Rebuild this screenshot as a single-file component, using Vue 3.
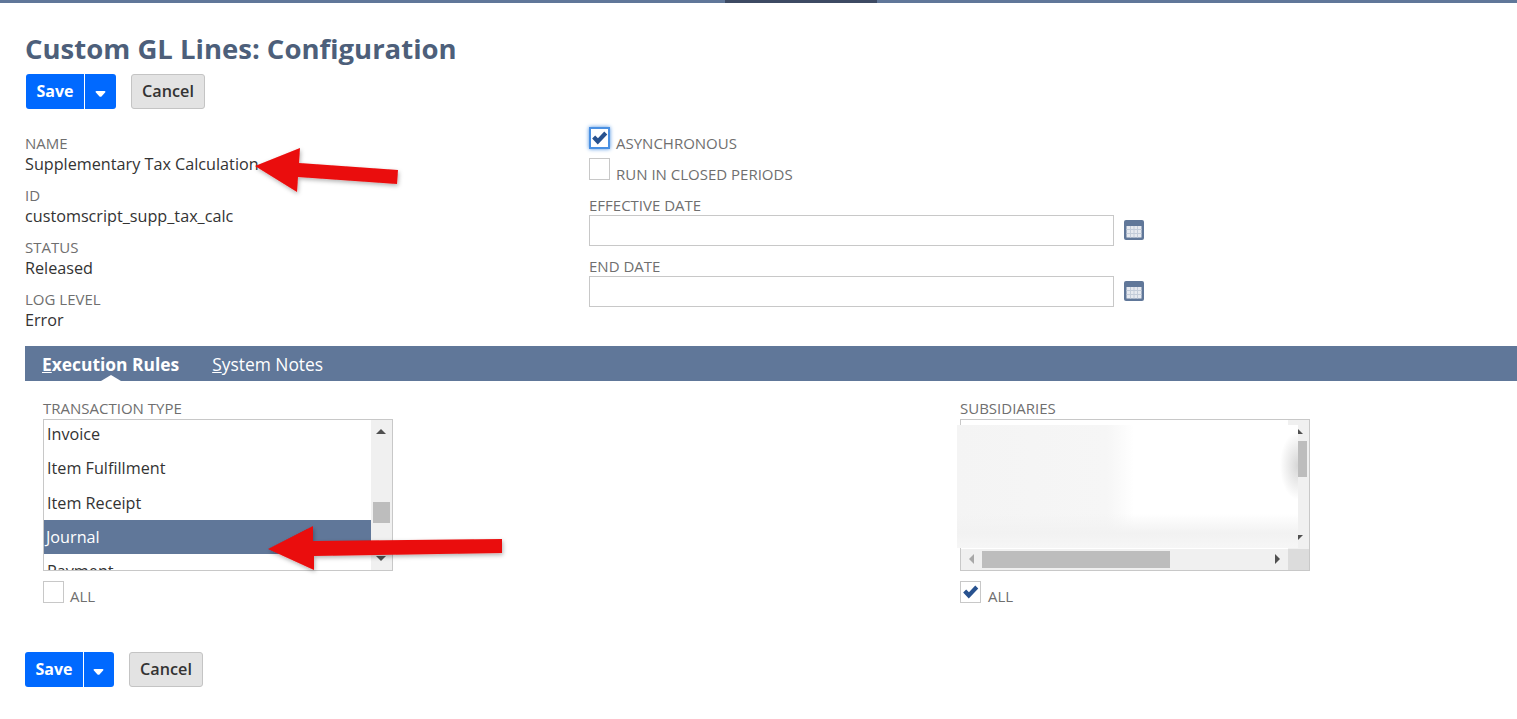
<script setup>
const fields = [
  { label: 'Name', value: 'Supplementary Tax Calculation' },
  { label: 'ID', value: 'customscript_supp_tax_calc' },
  { label: 'Status', value: 'Released' },
  { label: 'Log Level', value: 'Error' },
]
const rows = ['Invoice', 'Item Fulfillment', 'Item Receipt', 'Journal', 'Payment']
</script>

<template>
  <div class="page">
    <div class="topbar"><i class="seg a"></i><i class="seg b"></i><i class="seg c"></i></div>
    <h1 class="title">Custom GL Lines: Configuration</h1>
    <div class="actions first">
      <div class="save"><span class="save-text">Save</span><span class="save-drop"><svg class="caret" viewBox="0 0 10 6"><path d="M1 0h8c1 0 1.200 .8 .6 1.400L6 5.400c-.6 .6-1.400 .6-2 0L.4 1.400C-.2 .8 0 0 1 0z" /></svg></span></div>
      <button class="cancel">Cancel</button>
    </div>

    <div class="form">
      <div class="col-left">
        <div v-for="f in fields" :key="f.label" class="field">
          <div class="label">{{ f.label }}</div>
          <div class="value">{{ f.value }}</div>
        </div>
      </div>
      <div class="col-right">
        <div class="check-row focus-row">
          <span class="box focus">
            <svg viewBox="0 0 22 22" class="tick"><path d="M2.500 11.500L6 8l3.200 3.200L16.500 3.500 20 7 9 18.500z" /></svg>
          </span>
          <span class="label">Asynchronous</span>
        </div>
        <div class="check-row second-row">
          <span class="box"></span>
          <span class="label">Run in closed periods</span>
        </div>
        <div class="date-field">
          <div class="label">Effective Date</div>
          <div class="date-row">
            <div class="input"></div>
            <svg class="cal" viewBox="0 0 20 20">
              <rect x="0" y="0" width="20" height="20" rx="2" fill="#607799" />
              <rect x="2.500" y="6" width="15" height="11.500" fill="#e6e9ef" />
              <path d="M2.500 9.500h15M2.500 13.500h15M6.500 6v11.500M10 6v11.500M13.500 6v11.500" stroke="#c3ccd9" stroke-width="1" fill="none" />
            </svg>
          </div>
        </div>
        <div class="date-field">
          <div class="label">End Date</div>
          <div class="date-row">
            <div class="input"></div>
            <svg class="cal" viewBox="0 0 20 20">
              <rect x="0" y="0" width="20" height="20" rx="2" fill="#607799" />
              <rect x="2.500" y="6" width="15" height="11.500" fill="#e6e9ef" />
              <path d="M2.500 9.500h15M2.500 13.500h15M6.500 6v11.500M10 6v11.500M13.500 6v11.500" stroke="#c3ccd9" stroke-width="1" fill="none" />
            </svg>
          </div>
        </div>
      </div>
    </div>

    <div class="tabs">
      <span class="tab active"><u>E</u>xecution Rules<i class="notch"></i></span>
      <span class="tab"><u>S</u>ystem Notes</span>
    </div>

    <div class="lists">
      <div class="list-col">
        <div class="label list-label">Transaction Type</div>
        <div class="listbox">
          <div class="rows">
            <div v-for="r in rows" :key="r" class="row" :class="{ selected: r === 'Journal' }">{{ r }}</div>
          </div>
          <div class="vscroll">
            <i class="arrow up dark"></i>
            <i class="vthumb small"></i>
            <i class="arrow down dark"></i>
          </div>
        </div>
        <div class="check-row all">
          <span class="box"></span>
          <span class="label">All</span>
        </div>
      </div>

      <div class="list-col sub">
        <div class="label list-label">Subsidiaries</div>
        <div class="listbox multi">
          <div class="multi-main">
            <div class="rows"></div>
            <div class="vscroll short">
              <i class="arrow up dark"></i>
              <i class="vthumb big"></i>
              <i class="arrow down dark"></i>
            </div>
          </div>
          <div class="hscroll">
            <i class="arrow left"></i>
            <i class="hthumb"></i>
            <i class="arrow right"></i>
            <i class="corner"></i>
          </div>
        </div>
        <div class="blur"></div>
        <div class="check-row all">
          <span class="box">
            <svg viewBox="0 0 22 22" class="tick"><path d="M2.500 11.500L6 8l3.200 3.200L16.500 3.500 20 7 9 18.500z" /></svg>
          </span>
          <span class="label">All</span>
        </div>
      </div>
    </div>

    <div class="actions last">
      <div class="save"><span class="save-text">Save</span><span class="save-drop"><svg class="caret" viewBox="0 0 10 6"><path d="M1 0h8c1 0 1.200 .8 .6 1.400L6 5.400c-.6 .6-1.400 .6-2 0L.4 1.400C-.2 .8 0 0 1 0z" /></svg></span></div>
      <button class="cancel">Cancel</button>
    </div>

    <svg class="arrows" width="1517" height="719" viewBox="0 0 1517 719">
      <defs>
        <filter id="sh" x="-10%" y="-20%" width="120%" height="150%">
          <feDropShadow dx="1" dy="2" stdDeviation="2" flood-color="#000" flood-opacity="0.3" />
        </filter>
      </defs>
      <path filter="url(#sh)" fill="#ea0a0a" d="M255 166L300 148L299 163L398 170L397 184L298 177L297 192Z" />
      <path filter="url(#sh)" fill="#ea0a0a" d="M268 549L313 526L313 541L502 539L502 553L314 556L314 570Z" />
    </svg>
  </div>
</template>

<style>
html, body { margin: 0; background: #fff; }
</style>

<style scoped>
.page {
  position: relative;
  width: 1517px;
  height: 719px;
  overflow: hidden;
  font-family: "Open Sans", "Noto Sans", sans-serif;
  color: #333;
  background: #fff;
}
.topbar { display: flex; height: 3px; }
.seg { display: block; background: #607799; }
.seg.a { width: 725px; }
.seg.b { width: 152px; background: #3d4a63; }
.seg.c { flex: 1; }
.title {
  margin: 28px 0 0 25px;
  font-size: 27.500px;
  line-height: 36px;
  font-weight: 700;
  color: #4d5f7a;
}
.actions { display: flex; align-items: stretch; height: 35px; }
.actions.first { margin: 7px 0 0 26px; }
.actions.last { margin: 28px 0 0 25px; }
.save {
  display: flex;
  width: 90px;
  height: 35px;
  box-sizing: border-box;
  background: #0069ff;
  border-radius: 3px;
  color: #fff;
  font-size: 16px;
  font-weight: 700;
  line-height: 34px;
}
.actions.last .save { width: 89px; }
.save-text { width: 58px; text-align: center; border-right: 1px solid #fff; }
.save-drop { flex: 1; display: flex; align-items: center; justify-content: center; padding-right: 1px; }
.actions.last .save-drop { padding-right: 2px; }
.caret { display: block; width: 11px; height: 6px; margin-top: 4px; fill: #fff; }
.cancel {
  width: 74px;
  height: 35px;
  margin-left: 15px;
  padding: 0 0 2px;
  background: #e3e3e3;
  border: 1px solid #c4c4c4;
  border-radius: 3px;
  font-family: inherit;
  font-size: 16.200px;
  font-weight: 600;
  color: #333;
}
.form { display: flex; margin: 15px 0 0 25px; height: 222px; }
.col-left { width: 564px; padding-top: 9px; }
.field { height: 52px; }
.label {
  font-size: 15px;
  line-height: 20px;
  color: #6f6f6f;
  text-transform: uppercase;
  white-space: nowrap;
}
.value { font-size: 16.200px; line-height: 21px; color: #333; margin-top: 1px; }
.col-right { width: 560px; padding-top: 3px; }
.check-row { display: flex; align-items: flex-start; }
.box {
  display: block;
  box-sizing: border-box;
  width: 21px;
  height: 22px;
  border: 1px solid #c8c8c8;
  background: #fff;
  flex: none;
}
.box.focus {
  border: 2px solid #4a90e2;
  box-shadow: 0 0 4px #4a90e2;
}
.box.focus .tick { margin: -1px 0 0 -1px; }
.tick { display: block; width: 19px; height: 20px; }
.tick path { fill: #28528f; }
.check-row .label { margin: 6px 0 0 6px; }
.second-row { margin-top: 9px; }
.focus-row { height: 22px; }
.date-field { margin-top: 11px; }
.date-row { display: flex; align-items: center; gap: 10px; }
.input {
  box-sizing: border-box;
  width: 525px;
  height: 31px;
  border: 1px solid #c8c8c8;
  background: #fff;
}
.date-field + .date-field { margin-top: 10px; }
.cal { width: 20px; height: 20px; display: block; margin-top: -1px; }
.tabs {
  display: flex;
  height: 35px;
  margin: 0 0 0 25px;
  padding-left: 17px;
  gap: 33px;
  background: #607799;
  color: #fff;
  font-size: 17.400px;
  line-height: 36px;
}
.tab { position: relative; white-space: nowrap; }
.tab.active { font-weight: 700; }
.notch {
  position: absolute;
  left: 59px;
  bottom: 0;
  width: 0;
  height: 0;
  border-left: 10px solid transparent;
  border-right: 10px solid transparent;
  border-bottom: 6px solid #fff;
}
.lists { display: flex; margin: 18px 0 0 43px; height: 225px; }
.list-col { width: 917px; position: relative; }
.list-col.sub { width: 350px; }
.list-label { position: relative; top: -1px; }
.listbox {
  position: relative;
  display: flex;
  box-sizing: border-box;
  width: 350px;
  height: 152px;
  border: 1px solid #c8c8c8;
  overflow: hidden;
}
.rows { flex: 1; overflow: hidden; }
.rows .row:first-child { margin-top: -3px; }
.row {
  height: 34.300px;
  padding-left: 3px;
  font-size: 16.200px;
  line-height: 34px;
  color: #333;
  white-space: nowrap;
}
.row.selected { background: #607799; color: #fff; padding-left: 2px; }
.vscroll {
  width: 21px;
  flex: none;
  background: #f0f0f0;
  position: relative;
}
.arrow { position: absolute; display: block; width: 0; height: 0; }
.arrow.up {
  top: 9px;
  left: 5px;
  border-left: 5px solid transparent;
  border-right: 5px solid transparent;
  border-bottom: 5px solid #505050;
}
.arrow.down {
  bottom: 9px;
  left: 5px;
  border-left: 5px solid transparent;
  border-right: 5px solid transparent;
  border-top: 5px solid #505050;
}
.vthumb { position: absolute; left: 2px; width: 17px; background: #bdbdbd; display: block; }
.vthumb.small { top: 82px; height: 21px; }
.vthumb.big { top: 21px; height: 36px; }
.multi { flex-direction: column; }
.multi-main { flex: 1; display: flex; min-height: 0; }
.hscroll {
  position: relative;
  height: 21px;
  flex: none;
  background: #f0f0f0;
}
.hthumb { position: absolute; left: 21px; top: 2px; width: 188px; height: 17px; background: #bdbdbd; display: block; }
.arrow.left {
  left: 8px;
  top: 5px;
  border-top: 5px solid transparent;
  border-bottom: 5px solid transparent;
  border-right: 5px solid #a8a8a8;
}
.arrow.right {
  left: 314px;
  top: 5px;
  border-top: 5px solid transparent;
  border-bottom: 5px solid transparent;
  border-left: 5px solid #505050;
}
.corner { position: absolute; right: 0; top: 0; width: 21px; height: 21px; background: #dcdcdc; display: block; }
.blur {
  position: absolute;
  left: -3px;
  top: 26px;
  width: 341px;
  height: 123px;
  background:
    radial-gradient(ellipse 18px 34px at 100% 33%, #d6d6d6, transparent),
    linear-gradient(180deg, rgba(243, 243, 243, 0) 72%, #f2f2f2 88%, #f6f6f6 100%),
    linear-gradient(90deg, #f4f4f4 0, #f6f6f6 44%, #fff 52%, #fff 100%),
    #fff;
}
.all { margin-top: 10px; }
.all .label { margin-top: 5px; }
.sub .all .label { margin-left: 7px; }
.arrows { position: absolute; left: 0; top: 0; pointer-events: none; }
</style>
